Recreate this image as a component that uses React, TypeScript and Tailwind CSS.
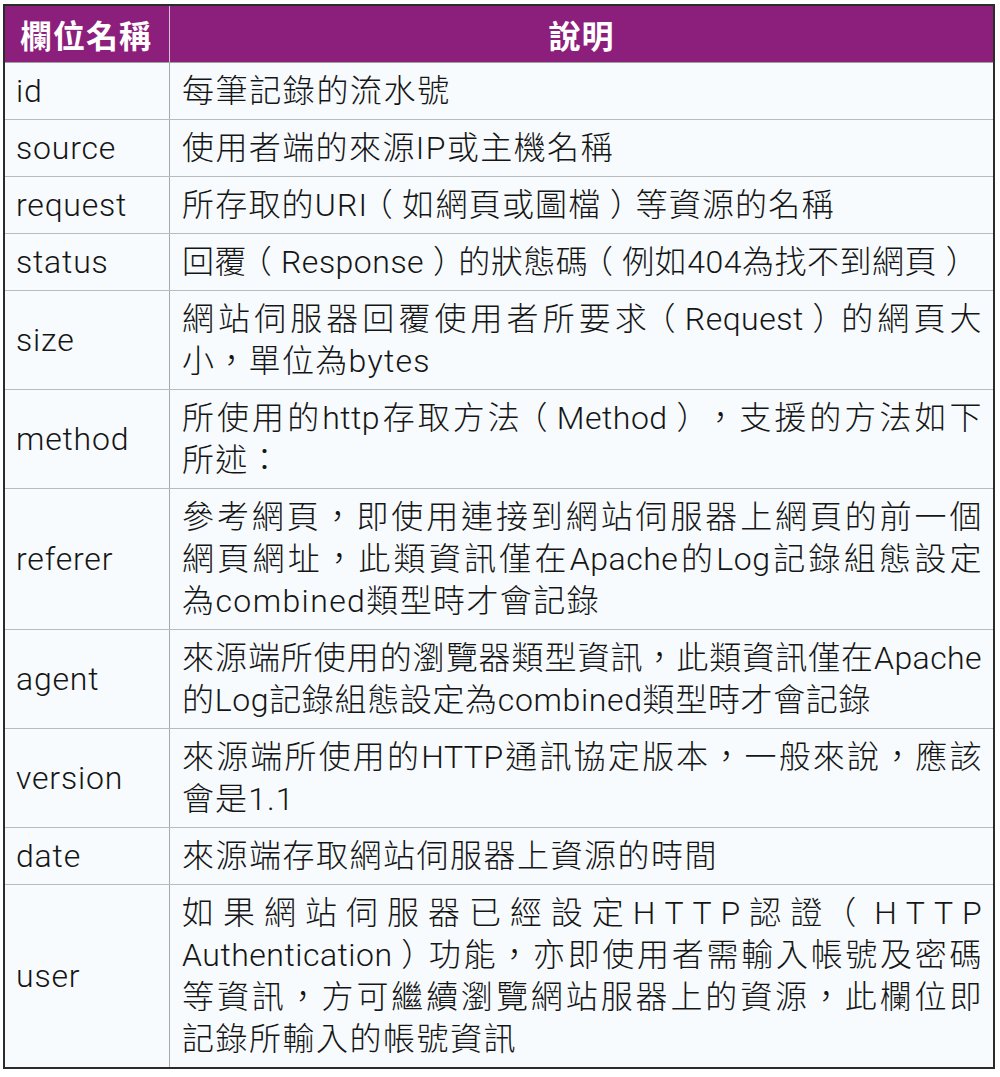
import React from "react";

type Line = { t: string; tr?: string };
type Row = { name: string; lines: Line[] };

const rows: Row[] = [
  { name: "id", lines: [{ t: "每筆記錄的流水號", tr: "tracking-[1.6px]" }] },
  { name: "source", lines: [{ t: "使用者端的來源IP或主機名稱", tr: "tracking-[1.4px]" }] },
  { name: "request", lines: [{ t: "所存取的URI（如網頁或圖檔）等資源的名稱", tr: "tracking-[1.2px]" }] },
  { name: "status", lines: [{ t: "回覆（Response）的狀態碼（例如404為找不到網頁）", tr: "tracking-[0.5px]" }] },
  {
    name: "size",
    lines: [
      { t: "網站伺服器回覆使用者所要求（Request）的網頁大" },
      { t: "小，單位為bytes", tr: "tracking-[1.3px]" },
    ],
  },
  {
    name: "method",
    lines: [{ t: "所使用的http存取方法（Method），支援的方法如下" }, { t: "所述：", tr: "tracking-[1.3px]" }],
  },
  {
    name: "referer",
    lines: [
      { t: "參考網頁，即使用連接到網站伺服器上網頁的前一個" },
      { t: "網頁網址，此類資訊僅在Apache的Log記錄組態設定" },
      { t: "為combined類型時才會記錄", tr: "tracking-[1.4px]" },
    ],
  },
  {
    name: "agent",
    lines: [
      { t: "來源端所使用的瀏覽器類型資訊，此類資訊僅在Apache", tr: "tracking-[0.4px]" },
      { t: "的Log記錄組態設定為combined類型時才會記錄", tr: "tracking-[0.65px]" },
    ],
  },
  {
    name: "version",
    lines: [{ t: "來源端所使用的HTTP通訊協定版本，一般來說，應該" }, { t: "會是1.1", tr: "tracking-[1.1px]" }],
  },
  { name: "date", lines: [{ t: "來源端存取網站伺服器上資源的時間", tr: "tracking-[1.5px]" }] },
  {
    name: "user",
    lines: [
      { t: "SPREAD:如果網站伺服器已經設定HTTP認證（HTTP" },
      { t: "Authentication）功能，亦即使用者需輸入帳號及密碼" },
      { t: "等資訊，方可繼續瀏覽網站服器上的資源，此欄位即" },
      { t: "記錄所輸入的帳號資訊", tr: "tracking-[1.5px]" },
    ],
  },
];

const PAREN =
  "inline-block w-[34px] text-center [text-align-last:center] [font-feature-settings:'halt']";

function Segments({ text }: { text: string }) {
  const parts = text.split(/([（）])/).filter((p) => p.length > 0);
  return (
    <>
      {parts.map((p, i) =>
        p === "（" || p === "）" ? (
          <span key={i} className={PAREN}>
            {p}
          </span>
        ) : (
          <React.Fragment key={i}>{p}</React.Fragment>
        )
      )}
    </>
  );
}

function TextLine({ line, justify }: { line: Line; justify: boolean }) {
  if (line.t.startsWith("SPREAD:")) {
    const chars = Array.from(line.t.slice(7));
    return (
      <div className="flex justify-between whitespace-nowrap">
        {chars.map((c, i) => (
          <span key={i} className={c === "（" ? PAREN : ""}>
            {c}
          </span>
        ))}
      </div>
    );
  }
  const base = justify
    ? "whitespace-nowrap text-justify [text-align-last:justify]"
    : "whitespace-nowrap text-left";
  return (
    <div className={base + " " + (line.tr ?? "tracking-[0.5px]")}>
      <Segments text={line.t} />
    </div>
  );
}

export default function App() {
  return (
    <div className="w-[1000px] h-[1077px] bg-white pt-[4px] pl-[3px]">
      <div
        className="w-[992px] border-[2px] border-[#2b2b2b] bg-[#f7fbfe] text-[#151515]"
        style={{ fontFamily: 'Roboto, "Liberation Sans", "Noto Sans CJK TC", sans-serif' }}
      >
        <div
          className="grid grid-cols-[165px_1fr] bg-[#8c1f7b] text-white font-bold text-[32px] leading-[42px] tracking-[1px] border-b border-[#a0a0a0]"
          style={{ fontFamily: '"Noto Sans CJK TC", sans-serif' }}
        >
          <div className="pl-[15px] py-[7px] border-r border-[#d8c0d4]">欄位名稱</div>
          <div className="py-[7px] text-center">說明</div>
        </div>
        {rows.map((r, idx) => (
          <div
            key={r.name}
            className={
              idx === rows.length - 1
                ? "grid grid-cols-[165px_1fr]"
                : "grid grid-cols-[165px_1fr] border-b border-[#b9bcbf]"
            }
          >
            <div className="flex items-center pl-[11px] border-r border-[#a8a8a8] text-[32px] leading-[42px] tracking-[0.8px] font-light">
              {r.name}
            </div>
            <div className="pl-[12px] pr-[11px] py-[7px] text-[32px] leading-[42px] font-light">
              {r.lines.map((l, i) => (
                <TextLine key={i} line={l} justify={i < r.lines.length - 1} />
              ))}
            </div>
          </div>
        ))}
      </div>
    </div>
  );
}
